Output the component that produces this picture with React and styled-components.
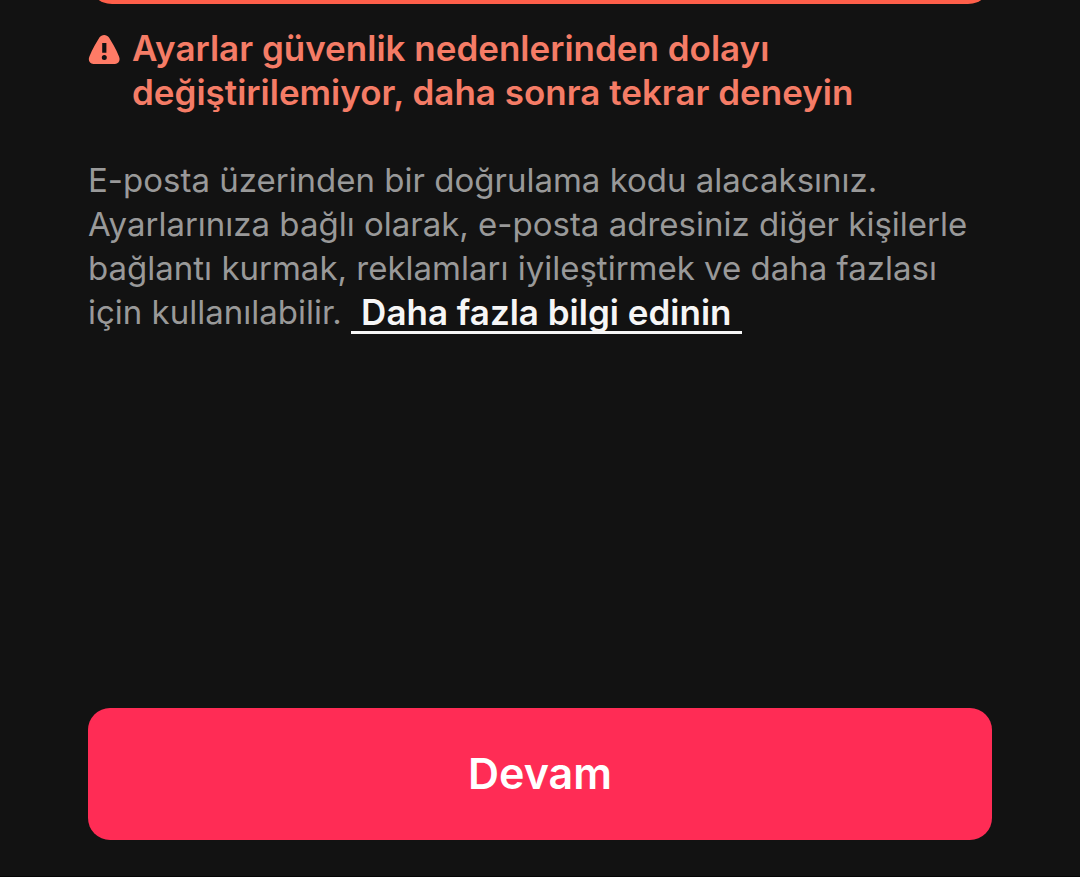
import React from "react";
import styled, { createGlobalStyle } from "styled-components";

const GlobalStyle = createGlobalStyle`
  * { box-sizing: border-box; }
  body {
    margin: 0;
    background: #121212;
    font-family: Inter, "Liberation Sans", sans-serif;
  }
`;

const Page = styled.main`
  display: flex;
  flex-direction: column;
  min-height: 100vh;
  padding: 0 88px 36px;
  overflow: hidden;
  background: #121212;
  border-bottom: 1px solid #050505;
`;

const FieldEdge = styled.div`
  height: 24px;
  margin-top: -20px;
  flex: none;
  border-radius: 0 0 24px 24px;
  background: #ff5f4a;
`;

const ErrorMessage = styled.div`
  display: flex;
  gap: 12px;
  margin-top: 22px;
  color: #f57c66;
`;

const WarningIcon = styled.svg`
  flex: none;
  width: 32px;
  height: 30px;
  margin-top: 9px;
  color: #ff7b66;
`;

const ErrorText = styled.p`
  margin: 0;
  font-size: 35px;
  font-weight: 600;
  line-height: 44px;
`;

const Description = styled.p`
  margin: 44px 0 0;
  color: #999999;
  font-size: 33px;
  line-height: 44px;
`;

const LearnMore = styled.a`
  display: inline-block;
  height: 44px;
  padding: 0 10px;
  font-size: 35px;
  line-height: 44px;
  vertical-align: top;
  color: #f6f6f6;
  font-weight: 600;
  text-decoration: none;
  border-bottom: 3px solid #f6f6f6;
`;

const ContinueButton = styled.button`
  width: 100%;
  height: 132px;
  margin-top: auto;
  padding: 0 0 2px;
  border: 0;
  border-radius: 22px;
  background: #ff2c55;
  color: #ffffff;
  font-family: inherit;
  font-size: 43px;
  font-weight: 600;
  cursor: pointer;
`;

export default function App() {
  return (
    <>
      <GlobalStyle />
      <Page>
        <FieldEdge />
        <ErrorMessage role="alert">
          <WarningIcon viewBox="0 0 32 30" aria-hidden="true">
            <path
              fill="currentColor"
              fillRule="evenodd"
              d="M11.4 2.6C13.6 -.8 18.8 -.8 21 2.6L25.6 10.2Q28.8 15.8 31 21.6C32.6 25.4 30.8 28.9 27 28.9H5.4C1.6 28.9 -.2 25.4 1.4 21.6Q3.6 15.8 6.8 10.2ZM14.2 8V17.8H18.4V8ZM16.3 20A2.5 2.5 0 1 0 16.3 25A2.5 2.5 0 1 0 16.3 20Z"
            />
          </WarningIcon>
          <ErrorText>
            Ayarlar güvenlik nedenlerinden dolayı
            <br />
            değiştirilemiyor, daha sonra tekrar deneyin
          </ErrorText>
        </ErrorMessage>
        <Description>
          E-posta üzerinden bir doğrulama kodu alacaksınız.
          <br />
          Ayarlarınıza bağlı olarak, e-posta adresiniz diğer kişilerle
          <br />
          bağlantı kurmak, reklamları iyileştirmek ve daha fazlası
          <br />
          için kullanılabilir. <LearnMore href="#">Daha fazla bilgi edinin</LearnMore>
        </Description>
        <ContinueButton type="button">Devam</ContinueButton>
      </Page>
    </>
  );
}
